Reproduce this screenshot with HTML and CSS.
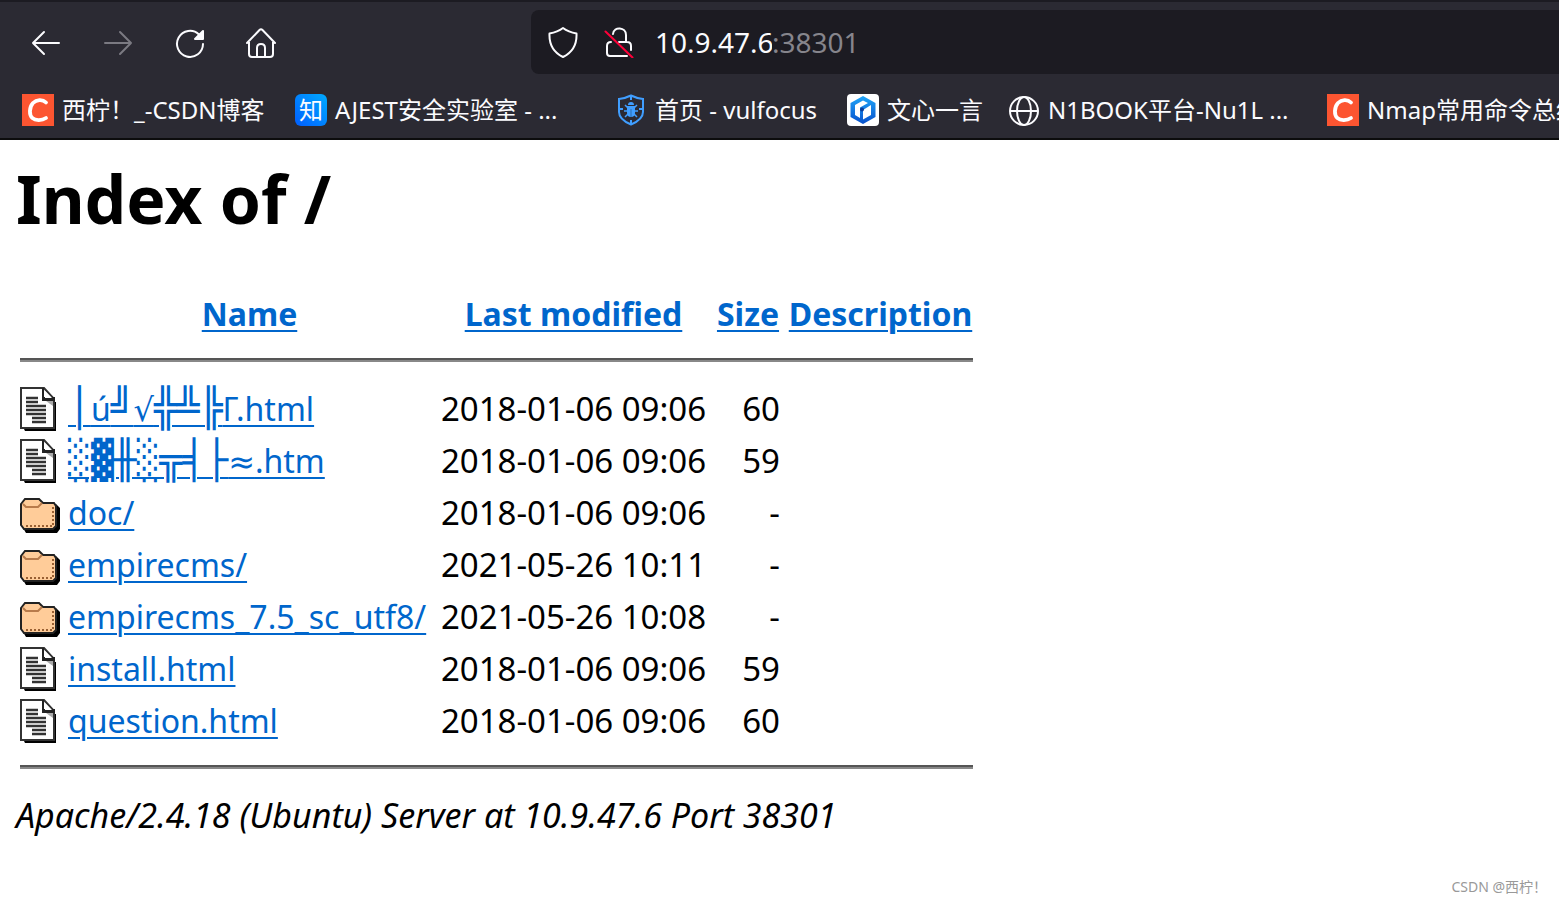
FILE: index.html
```
<!DOCTYPE html>
<html lang="zh-CN">
<head>
<meta charset="utf-8">
<title>Index of /</title>
<link rel="stylesheet" href="styles.css">
</head>
<body>
<svg class="defs" width="0" height="0" aria-hidden="true">
  <symbol id="file" viewBox="0 0 40 44">
    <path d="M3 40h31V15h2v29H5z" fill="#000"/>
    <path d="M1 1h23l10 11v29H1z" fill="#fff" stroke="#333" stroke-width="2"/>
    <path d="M22 1h2v9h11v4H22z" fill="#222"/>
    <path d="M25 4l7 7h-7z" fill="#fff"/>
    <path d="M26 14h7v5z" fill="#aaa"/>
    <path d="M6 11h12M6 15h12M6 19h20M6 23h20M6 27h20M12 31h14M12 35h14" stroke="#333" stroke-width="2.400"/>
  </symbol>
  <symbol id="folder" viewBox="0 0 40 44">
    <path d="M3 37l3 5h31l3-4V17l-4-4-2 24z" fill="#000"/>
    <path d="M1 13l4-5h14l4 4h11l2 3v20l-3 3H4l-3-4z" fill="#fc9" stroke="#222" stroke-width="2"/>
    <path d="M3 13l3 3h12l4-4" fill="none" stroke="#b87b4b" stroke-width="2"/>
    <path d="M6 35h26" stroke="#996033" stroke-width="2" stroke-dasharray="2 2"/>
    <path d="M33 16v18" stroke="#996033" stroke-width="2" stroke-dasharray="2 2"/>
  </symbol>
  <symbol id="csdn" viewBox="0 0 32 32">
    <path d="M0 0h32v32H0z" fill="#fc5531"/>
    <path d="M24 8.500C20.500 5 14.500 5.500 11 9 7 13.500 7 21 10.500 24.200c3 2.800 9.500 2.500 13.500-.2" fill="none" stroke="#fff" stroke-width="3.800" stroke-linecap="round"/>
  </symbol>
</svg>

<header class="chrome">
  <div class="toolbar">
    <nav class="nav">
      <button type="button" aria-label="Back"><svg viewBox="0 0 32 32"><path d="M29 17H3M14 6L3 17l11 11"/></svg></button>
      <button type="button" aria-label="Forward" disabled><svg viewBox="0 0 32 32"><path d="M3 17h26M18 6l11 11-11 11"/></svg></button>
      <button type="button" aria-label="Reload"><svg viewBox="0 0 32 32"><path d="M29 18a13 13 0 1 1-4-9.500"/><path d="M29 5v8h-8z" fill="currentColor"/></svg></button>
      <button type="button" aria-label="Home"><svg viewBox="0 0 32 32"><path d="M1 17L13.500 4q1.500-1.500 3 0L29 17M3 16v12q0 3 3 3h18q3 0 3-3V16M11 31V22q0-4 4-4t4 4v9"/></svg></button>
    </nav>
    <div class="address">
      <svg class="shield" viewBox="0 0 32 32"><path d="M16 2c4 3 8 4.500 13.500 5.500C30 18 26 26 16 31 6 26 2 18 2.500 7.500 8 6.500 12 5 16 2z"/></svg>
      <svg class="lock" viewBox="0 0 32 32"><path d="M10 8c1-8 13-7 13 1v7M8 16q-4 0-4 4v7q0 3 3 3h17M16 16h8q4 0 4 4v4"/><path class="slash" d="M2.500 5.500l27 26"/></svg>
      <label class="url"><input type="text" value="10.9.47.6" aria-label="Address"><span class="port">:38301</span></label>
    </div>
  </div>
  <nav class="bookmarks">
    <a class="b1" href="#"><svg viewBox="0 0 32 32"><use href="#csdn"/></svg><span>西柠！_-CSDN博客</span></a>
    <a class="b2" href="#"><span class="zhi">知</span><span>AJEST安全实验室 - ...</span></a>
    <a class="b3" href="#"><svg viewBox="0 0 32 32"><g fill="none" stroke="#409eff" stroke-width="2"><path d="M16 1.500c4 2 8 3 12 3.500v13c0 6-6 10-12 12.500C10 28 4 24 4 18V5c4-.5 8-1.500 12-3.500zM16 1v5M16 26v5M4 15h4M24 15h4"/><path d="M10 11l3 3M22 11l-3 3M9 17h14M10 23l3-3M22 23l-3-3" stroke-width="1.500"/></g><path d="M13 11a3 3 0 0 1 6 0zM12 12h8v7q0 4-4 4t-4-4z" fill="#409eff"/><path d="M16 15v8" stroke="#2b6cb0"/></svg><span>首页 - vulfocus</span></a>
    <a class="b4" href="#"><svg viewBox="0 0 32 32"><defs><linearGradient id="wx" x2="0" y2="1"><stop stop-color="#20a5f8"/><stop offset="1" stop-color="#0750cc"/></linearGradient></defs><rect width="32" height="32" rx="4" fill="#fff"/><path d="M16 2l12.500 7v14L16 30 3.500 23V9z" fill="url(#wx)"/><path d="M8 11l8-4.500 5 2.500-8 4.500v10.500l-5-3z" fill="#fff"/><path d="M16 16l8-5v10l-8 4.500z" fill="#fff"/><circle cx="15" cy="15.500" r="2" fill="#063b9b"/></svg><span>文心一言</span></a>
    <a class="b5" href="#"><svg viewBox="0 0 32 32"><g fill="none" stroke="#fbfbfe" stroke-width="2"><circle cx="16" cy="17" r="14"/><ellipse cx="16" cy="17" rx="7" ry="14"/><path d="M2 17h28"/></g></svg><span>N1BOOK平台-Nu1L ...</span></a>
    <a class="b6" href="#"><svg viewBox="0 0 32 32"><use href="#csdn"/></svg><span>Nmap常用命令总结</span></a>
  </nav>
</header>

<main>
  <h1>Index of /</h1>
  <table>
    <thead>
      <tr><th class="c-icon"></th><th class="c-name"><a href="#">Name</a></th><th class="c-date"><a href="#">Last modified</a></th><th class="c-size"><a href="#">Size</a></th><th class="c-desc"><a href="#">Description</a></th></tr>
      <tr class="rule"><td colspan="5"><hr></td></tr>
    </thead>
    <tbody>
      <tr><td><svg class="icon"><use href="#file"/></svg></td><td><a href="#"><span class="box">│</span>ú<span class="box">╝</span><span class="math">√</span><span class="box">╬╩╠</span>Γ.html</a></td><td>2018-01-06 09:06</td><td>60</td><td></td></tr>
      <tr><td><svg class="icon"><use href="#file"/></svg></td><td><a href="#"><span class="box">░▓╫░╦╡├</span><span class="math">≈</span>.htm</a></td><td>2018-01-06 09:06</td><td>59</td><td></td></tr>
      <tr><td><svg class="icon"><use href="#folder"/></svg></td><td><a href="#">doc/</a></td><td>2018-01-06 09:06</td><td>-</td><td></td></tr>
      <tr><td><svg class="icon"><use href="#folder"/></svg></td><td><a href="#">empirecms/</a></td><td>2021-05-26 10:11</td><td>-</td><td></td></tr>
      <tr><td><svg class="icon"><use href="#folder"/></svg></td><td><a href="#">empirecms_7.5_sc_utf8/</a></td><td>2021-05-26 10:08</td><td>-</td><td></td></tr>
      <tr><td><svg class="icon"><use href="#file"/></svg></td><td><a href="#">install.html</a></td><td>2018-01-06 09:06</td><td>59</td><td></td></tr>
      <tr><td><svg class="icon"><use href="#file"/></svg></td><td><a href="#">question.html</a></td><td>2018-01-06 09:06</td><td>60</td><td></td></tr>
      <tr class="rule last"><td colspan="5"><hr></td></tr>
    </tbody>
  </table>
  <address>Apache/2.4.18 (Ubuntu) Server at 10.9.47.6 Port 38301</address>
</main>
<footer class="credit">CSDN @西柠！</footer>
</body>
</html>
```

FILE: styles.css
```
* { box-sizing: border-box; }
body {
  margin: 0;
  min-height: 100vh;
  display: flex;
  flex-direction: column;
  overflow-x: hidden;
  background: #fff;
  color: #000;
  font-family: "Noto Sans", "Noto Sans CJK SC", sans-serif;
  font-size: 34px;
}
.defs { position: absolute; }

.chrome {
  overflow: hidden;
  background: #2b2a33;
  color: #fbfbfe;
  border-top: 2px solid #1c1b22;
  border-bottom: 2px solid #0c0c0d;
}
.toolbar { display: flex; padding-top: 8px; }
.nav {
  flex: 0 0 531px;
  display: flex;
  align-items: center;
  gap: 40px;
  padding-left: 30px;
}
.nav button {
  width: 32px;
  height: 32px;
  padding: 0;
  border: 0;
  background: none;
  color: inherit;
}
.nav button:disabled { color: #7b7a82; }
.nav svg, .address svg {
  display: block;
  width: 32px;
  height: 32px;
  fill: none;
  stroke: currentColor;
  stroke-width: 2;
  stroke-linecap: round;
  stroke-linejoin: round;
}
.address {
  flex: 1;
  height: 64px;
  display: flex;
  align-items: center;
  gap: 24px;
  padding-left: 16px;
  background: #1c1b22;
  border-radius: 8px 0 0 8px;
}
.address .slash { stroke: #ff0039; }
.url { display: flex; align-items: center; margin-left: -4px; font-size: 28px; }
.url input {
  width: 117px;
  padding: 0;
  border: 0;
  outline: 0;
  background: none;
  color: inherit;
  font: inherit;
}
.port { color: #86858c; }

.bookmarks {
  display: flex;
  gap: 24px;
  height: 64px;
  padding: 8px 0 0 22px;
  align-items: center;
}
.bookmarks a {
  flex: none;
  display: flex;
  align-items: center;
  gap: 8px;
  color: inherit;
  font-size: 24px;
  line-height: 32px;
  white-space: nowrap;
  text-decoration: none;
}
.bookmarks svg { flex: none; width: 32px; height: 32px; }
.b1 { width: 249px; }
.b2 { width: 296px; }
.b3 { width: 208px; }
.b4 { width: 137px; }
.b5 { width: 295px; }
.zhi {
  width: 32px;
  border-radius: 6px;
  background: linear-gradient(to top right, #005eff, #0af);
  text-align: center;
}

main { flex: 1; padding: 14px 16px 0; }
h1 {
  margin: 0 0 44px;
  font-size: 66px;
  line-height: 88px;
}
table { margin-left: -4px; border-spacing: 8px 4px; }
th, td {
  padding: 0;
  height: 48px;
  font-size: 32px;
  line-height: 44px;
  white-space: nowrap;
}
td:nth-child(3), td:nth-child(4) { font-size: 33px; }
td:nth-child(3) { text-align: center; }
td:nth-child(4) { text-align: right; }
.c-icon { width: 40px; }
.c-name { width: 363px; }
.c-date { width: 269px; }
.c-size { width: 64px; }
.c-desc { width: 185px; }
a { color: #06c; text-decoration-thickness: 2px; text-underline-offset: 4px; }
.box { font-family: "DejaVu Sans Mono", monospace; font-size: 38px; line-height: 1; }
.math { font-family: "DejaVu Sans", sans-serif; }
.icon { display: block; width: 40px; height: 44px; }
tr.rule td { height: 39px; padding-bottom: 4px; }
tr.rule.last td { height: 40px; }
hr {
  height: 4px;
  margin: 0;
  border: 0;
  border-top: 2px solid #555;
  background: #888;
}
address { line-height: 44px; }
.credit {
  padding: 0 12px 6px;
  color: #999;
  font-size: 14px;
  line-height: 20px;
  text-align: right;
}
```
